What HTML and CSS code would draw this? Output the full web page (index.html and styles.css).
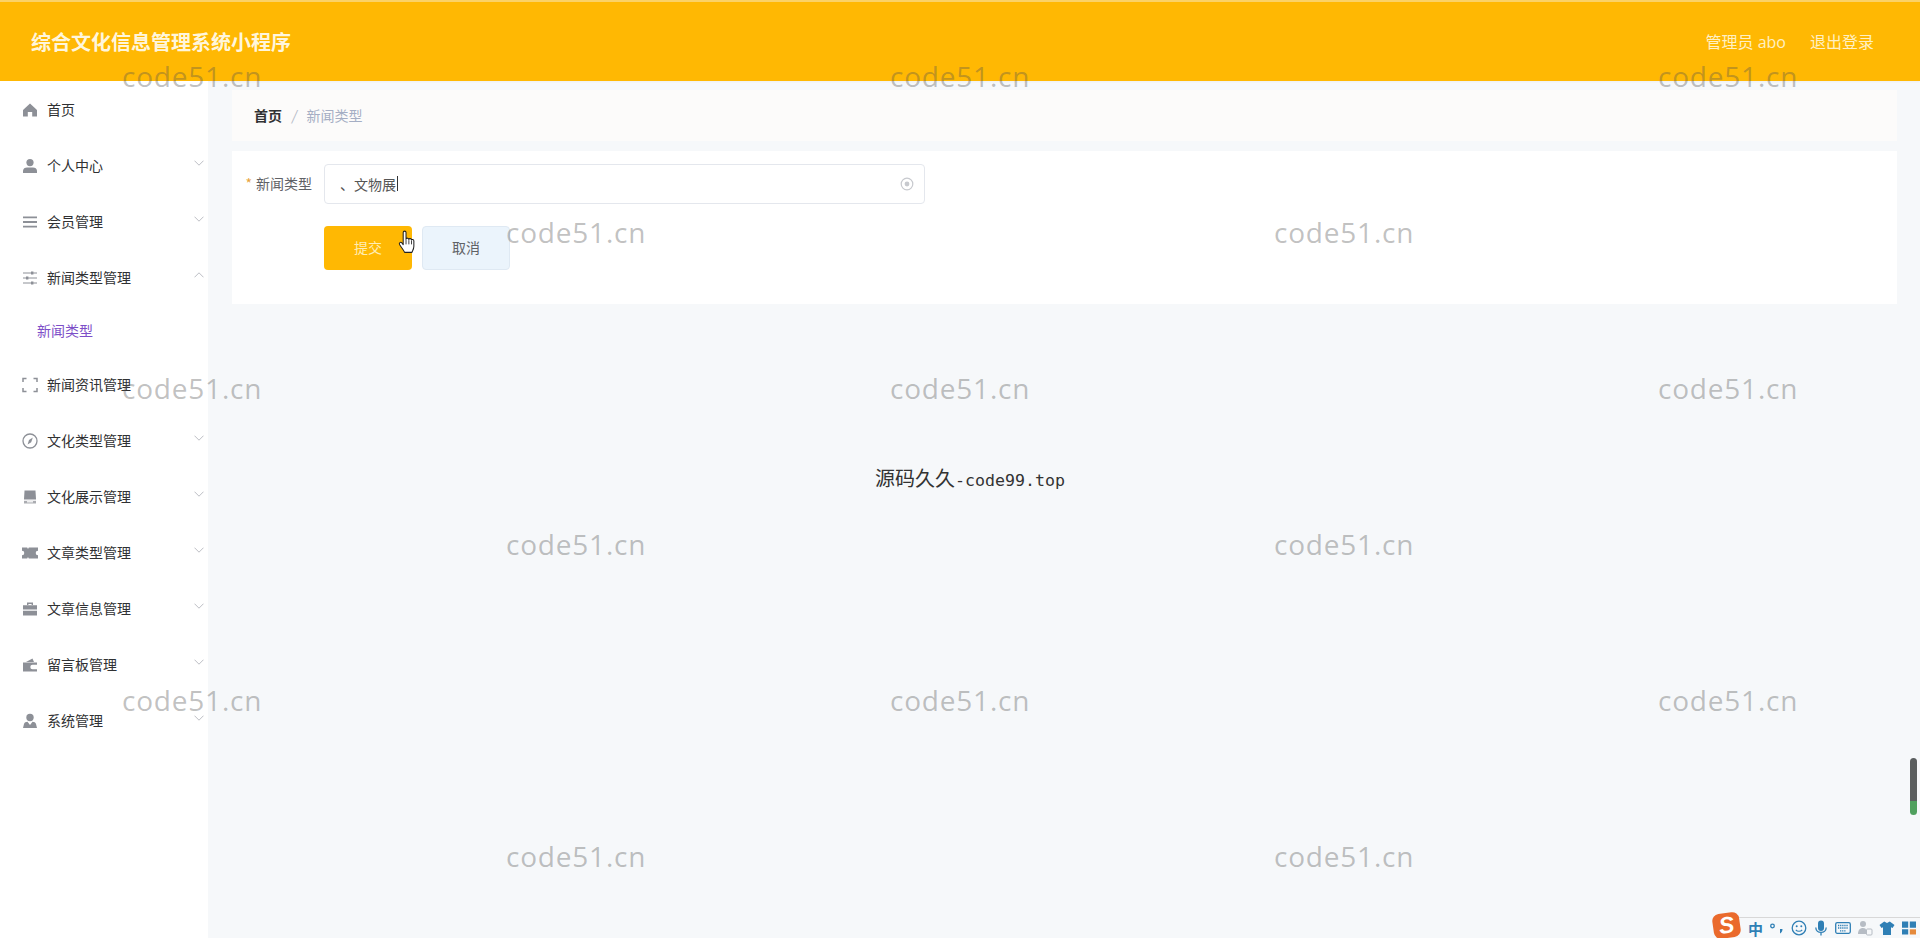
FILE: index.html
```html
<!DOCTYPE html>
<html lang="zh-CN">
<head>
<meta charset="utf-8">
<title>综合文化信息管理系统小程序</title>
<link rel="stylesheet" href="styles.css">
</head>
<body>
<svg class="defs" width="0" height="0" aria-hidden="true">
  <symbol id="chev-d" viewBox="0 0 10 6"><path d="M.5.7 5 5.2 9.500.7" fill="none" stroke="currentColor" stroke-width=".9"/></symbol>
  <symbol id="chev-u" viewBox="0 0 10 6"><path d="M.5 5.300 5 .8l4.500 4.500" fill="none" stroke="currentColor" stroke-width=".9"/></symbol>
</svg>
<header class="topbar">
  <div class="brand">综合文化信息管理系统小程序</div>
  <div class="user"><span>管理员 abo</span><span>退出登录</span></div>
</header>
<div class="shell">
  <aside class="side">
    <div class="item">
      <svg class="ico" viewBox="0 0 16 16"><path d="M8 1.500 1 8v6.500h4.800V10h4.400v4.500H15V8z" fill="currentColor"/></svg>
      <span class="label">首页</span>
    </div>
    <div class="item">
      <svg class="ico" viewBox="0 0 16 16"><circle cx="8" cy="4.600" r="3.600" fill="currentColor"/><path d="M1 15v-2.200C1 10.500 3 9.400 5 9.400h6c2 0 4 1.100 4 3.400V15z" fill="currentColor"/></svg>
      <span class="label">个人中心</span>
      <svg class="chev"><use href="#chev-d"/></svg>
    </div>
    <div class="item">
      <svg class="ico" viewBox="0 0 16 16"><path d="M1 2.500h14v1.800H1zM1 7.100h14v1.800H1zM1 11.700h14v1.800H1z" fill="currentColor"/></svg>
      <span class="label">会员管理</span>
      <svg class="chev"><use href="#chev-d"/></svg>
    </div>
    <div class="item">
      <svg class="ico" viewBox="0 0 16 16"><path d="M1 3h14M1 8h14M1 13h14" stroke="currentColor" stroke-width="1"/><path d="M9 1.500h2.400v3H9zM4 6.500h2.400v3H4zM9 11.500h2.400v3H9z" fill="currentColor"/></svg>
      <span class="label">新闻类型管理</span>
      <svg class="chev"><use href="#chev-u"/></svg>
    </div>
    <div class="sub">新闻类型</div>
    <div class="item">
      <svg class="ico" viewBox="0 0 16 16"><path d="M1 5V1.500h3.500M11.500 1.500H15V5M15 11v3.500h-3.500M4.500 14.500H1V11" fill="none" stroke="currentColor" stroke-width="1.500"/></svg>
      <span class="label">新闻资讯管理</span>
    </div>
    <div class="item">
      <svg class="ico" viewBox="0 0 16 16"><circle cx="8" cy="8" r="7" fill="none" stroke="currentColor" stroke-width="1.300"/><path d="M10.800 4.500 9.200 9.200 5.600 11.500l1.400-4.600z" fill="currentColor"/></svg>
      <span class="label">文化类型管理</span>
      <svg class="chev"><use href="#chev-d"/></svg>
    </div>
    <div class="item">
      <svg class="ico" viewBox="0 0 16 16"><path d="M2.500 1.500h11l.5 9H2z" fill="currentColor"/><path d="M2 11.800h12v2.700H2z" fill="currentColor" opacity=".75"/><path d="M5 12.200h6v1.200H5z" fill="#fff"/></svg>
      <span class="label">文化展示管理</span>
      <svg class="chev"><use href="#chev-d"/></svg>
    </div>
    <div class="item">
      <svg class="ico" viewBox="0 0 16 16"><path d="M0 2.500h5.200l.8 1.400 .8-1.400H16v3.200a2.300 2.300 0 0 0 0 4.600v3.200H6.800l-.8-1.400-.8 1.400H0v-3.200a2.300 2.300 0 0 0 0-4.600z" fill="currentColor"/></svg>
      <span class="label">文章类型管理</span>
      <svg class="chev"><use href="#chev-d"/></svg>
    </div>
    <div class="item">
      <svg class="ico" viewBox="0 0 16 16"><path d="M5 4V1.500h6V4h-1.400V2.900H6.400V4z" fill="currentColor"/><path d="M1 4.200h14v4.400H1zM1 9.800h14v4.700H1z" fill="currentColor"/></svg>
      <span class="label">文章信息管理</span>
      <svg class="chev"><use href="#chev-d"/></svg>
    </div>
    <div class="item">
      <svg class="ico" viewBox="0 0 16 16"><path d="M4 5 10.500 1.500 12 5z" fill="currentColor"/><path d="M1 5.500h14v2.300h-4.500a2.200 2.200 0 0 0 0 4.400H15v2.300H1z" fill="currentColor"/></svg>
      <span class="label">留言板管理</span>
      <svg class="chev"><use href="#chev-d"/></svg>
    </div>
    <div class="item">
      <svg class="ico" viewBox="0 0 16 16"><circle cx="8" cy="4.500" r="3.700" fill="currentColor"/><path d="M1 15l1-4c.4-1.400 1.800-2.200 3.500-2.200L8 12l2.500-3.200c1.700 0 3.100.8 3.500 2.200l1 4z" fill="currentColor"/></svg>
      <span class="label">系统管理</span>
      <svg class="chev"><use href="#chev-d"/></svg>
    </div>
  </aside>
  <main class="content">
    <nav class="crumb"><b>首页</b><i>/</i><span>新闻类型</span></nav>
    <section class="card">
      <div class="field">
        <div class="flabel"><em>*</em>新闻类型</div>
        <div class="input">
          <span class="val">、文物展</span><span class="caret"></span>
          <svg class="clear" viewBox="0 0 14 14"><circle cx="7" cy="7" r="5.800" fill="none" stroke="currentColor" stroke-width="1.200"/><circle cx="7" cy="7" r="2.400" fill="currentColor"/></svg>
        </div>
      </div>
      <div class="actions">
        <div class="btn primary">提交
          <svg class="hand" viewBox="0 0 18 25"><path d="M5.500 2.500c0-2 3-2 3 0v7c.3-1.500 3-1.500 3 .4.300-1.500 2.700-1.300 2.800.5.400-1 2.500-.8 2.500 1V17c0 3-1.500 5-2 6.500H7C6 21 4.500 19.500 1.800 15.500c-1.300-2 1-3.500 2.300-2l1.400 1.800z" fill="#fff" stroke="#222" stroke-width="1.100" stroke-linejoin="round"/><path d="M8.500 10v5M11.500 10.500V15M14.300 11v4" stroke="#222" stroke-width=".9"/></svg>
        </div>
        <div class="btn ghost">取消</div>
      </div>
    </section>
    <div class="notice"><span class="cjk">源码久久</span>-code99.top</div>
  </main>
</div>
<div class="marks">
  <div class="row"><span>code51.cn</span><span>code51.cn</span><span>code51.cn</span></div>
  <div class="row alt"><span>code51.cn</span><span>code51.cn</span></div>
  <div class="row"><span>code51.cn</span><span>code51.cn</span><span>code51.cn</span></div>
  <div class="row alt"><span>code51.cn</span><span>code51.cn</span></div>
  <div class="row"><span>code51.cn</span><span>code51.cn</span><span>code51.cn</span></div>
  <div class="row alt"><span>code51.cn</span><span>code51.cn</span></div>
</div>
<div class="gauge"></div>
<div class="ime">
  <span class="ime-logo">S</span>
  <span class="ime-zh">中</span>
  <svg class="ime-i" viewBox="0 0 16 16"><circle cx="3.500" cy="6" r="1.800" fill="none" stroke="currentColor" stroke-width="1.300"/><path d="M11 9h2.500c0 2-1 3.500-2.500 4.500z" fill="currentColor"/></svg>
  <svg class="ime-i" viewBox="0 0 16 16"><circle cx="8" cy="8" r="6.800" fill="none" stroke="currentColor" stroke-width="1.300"/><circle cx="5.700" cy="6.300" r="1" fill="currentColor"/><circle cx="10.300" cy="6.300" r="1" fill="currentColor"/><path d="M4.800 9.800c1.500 2 4.900 2 6.400 0" fill="none" stroke="currentColor" stroke-width="1.100"/></svg>
  <svg class="ime-i" viewBox="0 0 16 16"><rect x="5" y=".5" width="6" height="10.500" rx="3" fill="currentColor"/><path d="M2.800 7.500c0 6.500 10.400 6.500 10.400 0M8 13v2.500" fill="none" stroke="currentColor" stroke-width="1.300"/></svg>
  <svg class="ime-i" viewBox="0 0 16 16"><rect x=".7" y="2.700" width="14.600" height="10.600" rx="1.500" fill="none" stroke="currentColor" stroke-width="1.300"/><path d="M3 5.500h10M3 8h10M5 10.800h6" stroke="currentColor" stroke-width="1.300" stroke-dasharray="1.300 .8"/></svg>
  <svg class="ime-i muted" viewBox="0 0 16 16"><circle cx="6" cy="4" r="3" fill="currentColor"/><path d="M1 14c0-4 2-6 5-6 2 0 3 .8 3 2v4z" fill="currentColor"/><rect x="9.500" y="9" width="5.500" height="6" rx="1" fill="none" stroke="currentColor"/></svg>
  <svg class="ime-i" viewBox="0 0 16 16"><path d="M5.200 1.500 8 3l2.800-1.500L15.500 5l-2 3-1.500-.8V15H4V7.200L2.500 8l-2-3z" fill="currentColor"/></svg>
  <svg class="ime-i" viewBox="0 0 16 16"><path d="M1 1.500h6.200v6.200H1zM8.800 1.500H15v6.200H8.800zM1 9.300h6.200v5.200H1z" fill="currentColor"/><path d="M8.800 9.300H15v5.200H8.800z" fill="#e58a3c"/></svg>
</div>
</body>
</html>
```
FILE: styles.css
```css
* { box-sizing: border-box; }
html, body { margin: 0; height: 938px; overflow: hidden; }
body {
  position: relative;
  width: 1920px;
  background: #f6f8fa;
  color: #333;
  font-family: "Noto Sans CJK SC", "Noto Sans", sans-serif;
  font-size: 14px;
}
.defs { position: absolute; }

.topbar {
  height: 81px;
  border-top: 2px solid #fbd267;
  background: #ffb803;
  display: flex;
  align-items: center;
  justify-content: space-between;
  padding: 0 46px 0 31px;
  box-shadow: 0 1px 2px rgba(0, 0, 0, .04);
}
.brand { color: #fff6dc; font-size: 20px; font-weight: 700; line-height: 1; }
.user {
  display: flex;
  gap: 24px;
  margin-bottom: 1px;
  color: #fff0c4;
  font-size: 16px;
  font-family: "Open Sans", "Noto Sans CJK SC", sans-serif;
}

.shell { display: flex; height: 857px; }
.side { width: 208px; flex: none; background: #fff; }
.item {
  height: 56px;
  display: flex;
  align-items: center;
  padding: 0 4px 0 22px;
}
.ico { width: 16px; height: 16px; color: #8d9097; flex: none; margin: 2px 9px 0 0; }
.label { flex: 1; color: #303133; white-space: nowrap; line-height: 20px; }
.chev { width: 10px; height: 6px; color: #b4b7bd; margin-bottom: 5px; flex: none; }
.sub { height: 51px; padding-left: 37px; line-height: 50px; color: #7d4fc8; }

.content { flex: 1; padding: 9px 23px 0 24px; min-width: 0; }
.crumb {
  height: 51px;
  background: #fcfbfa;
  display: flex;
  align-items: center;
  padding: 0 0 1px 22px;
}
.crumb b { color: #303133; font-weight: 700; }
.crumb i { color: #b4bac6; font-style: normal; margin: 0 9px 0 10px; transform: skewX(-8deg); }
.crumb span { color: #a5aec4; }

.card { margin-top: 10px; height: 153px; background: #fff; padding: 13px 0 0 0; }
.field { display: flex; align-items: center; }
.flabel { width: 92px; text-align: right; padding: 0 12px 2px 0; color: #606266; white-space: nowrap; }
.flabel em { color: #e8a33d; font-style: normal; margin-right: 4px; }
.input {
  width: 601px;
  height: 40px;
  border: 1px solid #e4e7ed;
  border-radius: 4px;
  display: flex;
  align-items: center;
  padding: 0 10px 1px 15px;
  color: #606266;
}
.val { color: #555; }
.caret { width: 1px; height: 15px; background: #333; margin-left: 1px; }
.clear { width: 14px; height: 14px; margin-left: auto; color: #c7c9ce; }
.actions { display: flex; gap: 10px; margin: 22px 0 0 92px; }
.btn {
  position: relative;
  width: 88px;
  height: 44px;
  border-radius: 4px;
  display: flex;
  align-items: center;
  justify-content: center;
  padding-bottom: 2px;
}
.primary { background: #ffb803; color: #ffedb5; }
.ghost { background: #ebf4fc; border: 1px solid #dfe9f3; color: #606266; }
.hand { position: absolute; left: 74px; top: 4px; width: 17px; height: 24px; }

.notice {
  margin-top: 160px;
  padding-left: 643px;
  font-family: "DejaVu Sans Mono", monospace;
  font-size: 16.6px;
  line-height: 28px;
  color: #333;
  white-space: nowrap;
}
.cjk { font-family: "Noto Sans CJK SC", sans-serif; font-size: 20px; }

.marks {
  position: absolute;
  left: 0;
  top: 54px;
  width: 1920px;
  pointer-events: none;
}
.row {
  display: flex;
  height: 156px;
  padding-left: 122px;
  font-family: "Open Sans", sans-serif;
  font-size: 28px;
  line-height: 44px;
  letter-spacing: .8px;
  color: rgba(80, 80, 80, .36);
}
.row:last-child { height: 44px; }
.row.alt { padding-left: 506px; }
.row span { width: 768px; flex: none; }
.row span:last-child { width: auto; }

.gauge {
  position: absolute;
  left: 1910px;
  top: 758px;
  width: 7px;
  height: 57px;
  border-radius: 4px;
  background: linear-gradient(#5a5e5f 0 76%, #4fa05e 76%);
}

.ime {
  position: absolute;
  right: 0;
  bottom: 0;
  display: flex;
  align-items: center;
  gap: 6px;
  height: 21px;
  width: 191px;
  border-top: 1px solid #d8d8d8;
  color: #2f7fb5;
}
.ime-logo {
  width: 27px;
  height: 25px;
  margin: -5px 2px 0 -16px;
  background: #ea6a2c;
  border-radius: 7px;
  transform: rotate(-8deg);
  color: #fff;
  font: italic 700 23px/25px "Liberation Sans", sans-serif;
  text-align: center;
  flex: none;
}
.ime-zh { font-size: 15px; font-weight: 700; line-height: 1; }
.ime-i { width: 16px; height: 16px; flex: none; }
.muted { color: #b6bcc4; }
```
